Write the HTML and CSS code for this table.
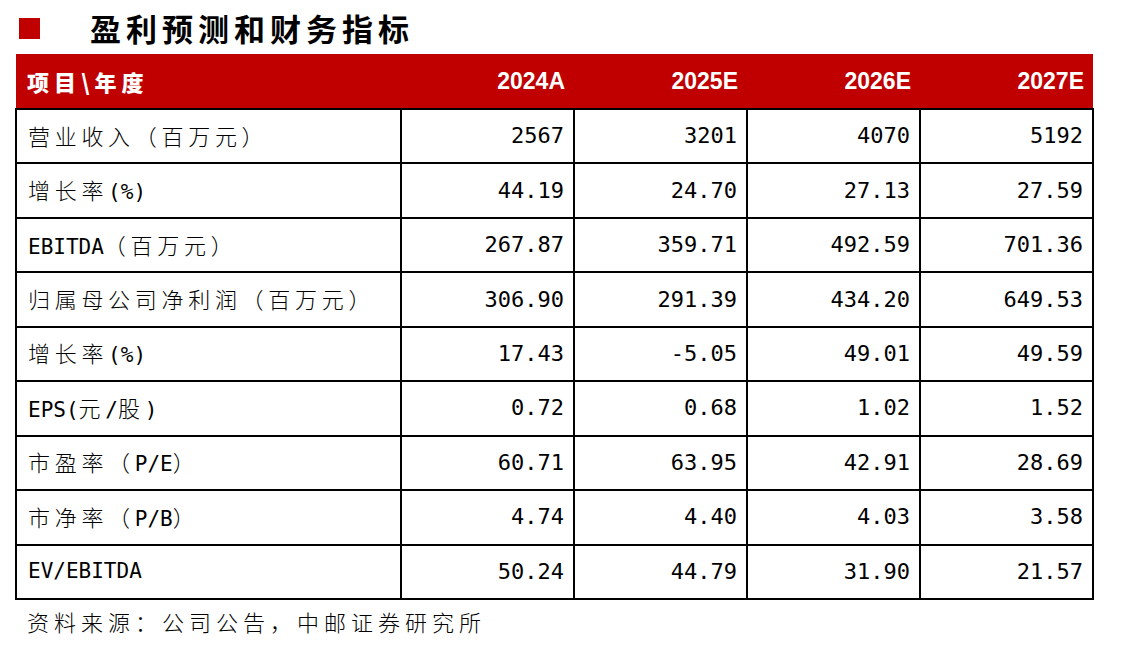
FILE: index.html
```html
<!DOCTYPE html>
<html lang="zh">
<head>
<meta charset="utf-8">
<link rel="stylesheet" href="styles.css">
</head>
<body>
<div class="title-row">
  <span class="square"></span>
  <h1 class="title">盈利预测和财务指标</h1>
</div>
<table class="fin">
  <colgroup>
    <col class="c-label"><col class="c-num"><col class="c-num"><col class="c-num"><col class="c-num">
  </colgroup>
  <thead>
    <tr>
      <th class="h-label">项目\年度</th>
      <th>2024A</th><th>2025E</th><th>2026E</th><th>2027E</th>
    </tr>
  </thead>
  <tbody>
    <tr><td class="label"><span class="cn">营业收入（百万元）</span></td><td>2567</td><td>3201</td><td>4070</td><td>5192</td></tr>
    <tr><td class="label"><span class="cn">增长率</span>(%)</td><td>44.19</td><td>24.70</td><td>27.13</td><td>27.59</td></tr>
    <tr><td class="label">EBITDA<span class="cn">（百万元）</span></td><td>267.87</td><td>359.71</td><td>492.59</td><td>701.36</td></tr>
    <tr><td class="label"><span class="cn">归属母公司净利润（百万元）</span></td><td>306.90</td><td>291.39</td><td>434.20</td><td>649.53</td></tr>
    <tr><td class="label"><span class="cn">增长率</span>(%)</td><td>17.43</td><td>-5.05</td><td>49.01</td><td>49.59</td></tr>
    <tr><td class="label">EPS(<span class="cn">元</span>/<span class="cn">股</span>)</td><td>0.72</td><td>0.68</td><td>1.02</td><td>1.52</td></tr>
    <tr><td class="label"><span class="cn">市盈率（</span>P/E<span class="cn">）</span></td><td>60.71</td><td>63.95</td><td>42.91</td><td>28.69</td></tr>
    <tr><td class="label"><span class="cn">市净率（</span>P/B<span class="cn">）</span></td><td>4.74</td><td>4.40</td><td>4.03</td><td>3.58</td></tr>
    <tr><td class="label">EV/EBITDA</td><td>50.24</td><td>44.79</td><td>31.90</td><td>21.57</td></tr>
  </tbody>
</table>
<p class="source">资料来源：公司公告，中邮证券研究所</p>
</body>
</html>
```
FILE: styles.css
```css
html, body {
  margin: 0;
  padding: 0;
  background: #ffffff;
}

body {
  width: 1135px;
  height: 652px;
  overflow: hidden;
  color: #000;
  font-family: "DejaVu Sans Mono", "Noto Sans CJK SC", monospace;
}

.title-row {
  display: flex;
  align-items: center;
  height: 54px;
  padding-left: 19px;
  box-sizing: border-box;
}

.square {
  width: 21px;
  height: 21px;
  background: #c00000;
  margin-top: 3px;
}

.title {
  margin: 0 0 0 50px;
  font-family: "Noto Sans CJK SC", sans-serif;
  font-weight: 700;
  font-size: 31px;
  letter-spacing: 5px;
  line-height: 1;
  color: #000;
}

.fin {
  margin-left: 15px;
  width: 1078px;
  border-collapse: collapse;
  table-layout: fixed;
}

.c-label { width: 385px; }
.c-num { width: 173px; }

.fin th {
  background: #c00000;
  color: #fff;
  height: 54px;
  padding: 0 9px 0 11px;
  text-align: right;
  font-family: "Liberation Sans", Arial, sans-serif;
  font-weight: 700;
  font-size: 23px;
  border: none;
}

.fin th.h-label {
  text-align: left;
  font-family: "Noto Sans CJK SC", sans-serif;
  font-weight: 900;
  font-size: 22px;
  letter-spacing: 5px;
}

.fin td {
  border: 2px solid #000;
  height: 52.45px;
  padding: 0 9px 0 11px;
  text-align: right;
  font-size: 22px;
  line-height: 1;
  white-space: nowrap;
}

.fin td.label {
  text-align: left;
  font-size: 21px;
}

.cn {
  font-family: "Noto Sans CJK SC", sans-serif;
  font-size: 22px;
  font-weight: 300;
  letter-spacing: 4.7px;
}

.source {
  margin: 5px 0 0 27px;
  font-family: "Noto Sans CJK SC", sans-serif;
  font-weight: 300;
  font-size: 22px;
  letter-spacing: 5px;
}
```
